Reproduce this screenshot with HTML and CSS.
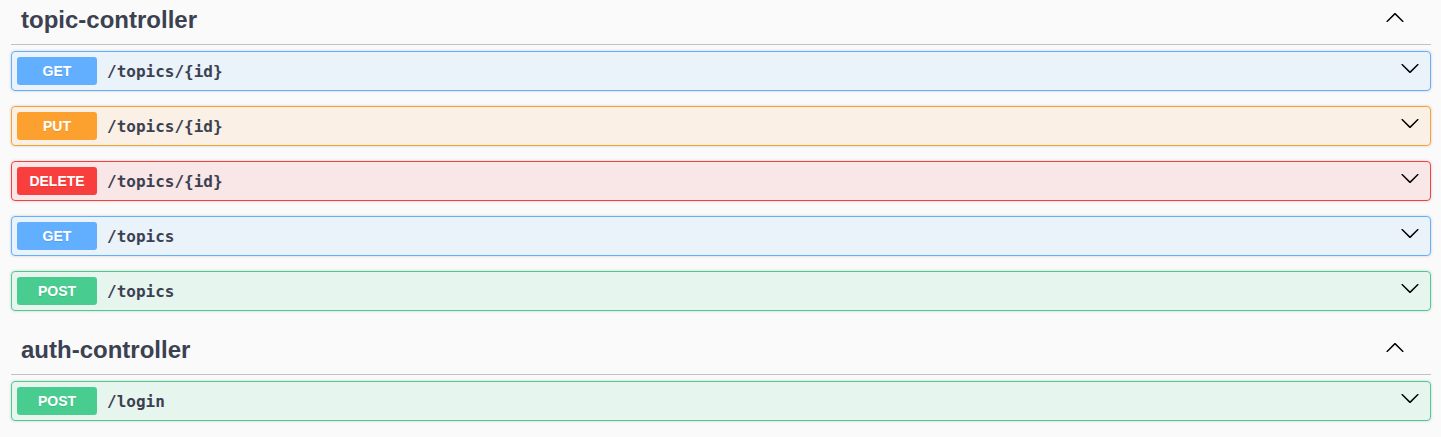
FILE: index.html
```html
<!DOCTYPE html>
<html lang="en">
<head>
<meta charset="utf-8">
<title>Swagger</title>
<link rel="stylesheet" href="styles.css">
</head>
<body>
<div class="wrapper">
  <section class="tag-section">
    <h3 class="tag">
      <span class="tag-name">topic-controller</span>
      <button class="expand" aria-label="collapse">
        <svg class="chev" width="20" height="20" viewBox="0 0 20 20"><path d="M17.418 14.908c.272.268.709.268.979 0s.271-.701 0-.969l-7.908-7.83c-.27-.268-.707-.268-.979 0l-7.908 7.83c-.27.268-.27.701 0 .969.271.268.709.268.979 0L10 7.773l7.418 7.135z"/></svg>
      </button>
    </h3>
    <div class="ops">
      <div class="opblock get">
        <div class="summary">
          <span class="method">GET</span>
          <span class="path">/topics/{id}</span>
          <svg class="chev arrow" width="20" height="20" viewBox="0 0 20 20"><path d="M17.418 6.109c.272-.268.709-.268.979 0s.271.701 0 .969l-7.908 7.83c-.27.268-.707.268-.979 0l-7.908-7.83c-.27-.268-.27-.701 0-.969.271-.268.709-.268.979 0L10 13.25l7.418-7.141z"/></svg>
        </div>
      </div>
      <div class="opblock put">
        <div class="summary">
          <span class="method">PUT</span>
          <span class="path">/topics/{id}</span>
          <svg class="chev arrow" width="20" height="20" viewBox="0 0 20 20"><path d="M17.418 6.109c.272-.268.709-.268.979 0s.271.701 0 .969l-7.908 7.83c-.27.268-.707.268-.979 0l-7.908-7.830c-.27-.268-.27-.701 0-.969.271-.268.709-.268.979 0L10 13.25l7.418-7.141z"/></svg>
        </div>
      </div>
      <div class="opblock delete">
        <div class="summary">
          <span class="method">DELETE</span>
          <span class="path">/topics/{id}</span>
          <svg class="chev arrow" width="20" height="20" viewBox="0 0 20 20"><path d="M17.418 6.109c.272-.268.709-.268.979 0s.271.701 0 .969l-7.908 7.83c-.27.268-.707.268-.979 0l-7.908-7.83c-.27-.268-.27-.701 0-.969.271-.268.709-.268.979 0L10 13.25l7.418-7.141z"/></svg>
        </div>
      </div>
      <div class="opblock get">
        <div class="summary">
          <span class="method">GET</span>
          <span class="path">/topics</span>
          <svg class="chev arrow" width="20" height="20" viewBox="0 0 20 20"><path d="M17.418 6.109c.272-.268.709-.268.979 0s.271.701 0 .969l-7.908 7.83c-.27.268-.707.268-.979 0l-7.908-7.83c-.27-.268-.27-.701 0-.969.271-.268.709-.268.979 0L10 13.25l7.418-7.141z"/></svg>
        </div>
      </div>
      <div class="opblock post">
        <div class="summary">
          <span class="method">POST</span>
          <span class="path">/topics</span>
          <svg class="chev arrow" width="20" height="20" viewBox="0 0 20 20"><path d="M17.418 6.109c.272-.268.709-.268.979 0s.271.701 0 .969l-7.908 7.83c-.27.268-.707.268-.979 0l-7.908-7.83c-.27-.268-.27-.701 0-.969.271-.268.709-.268.979 0L10 13.25l7.418-7.141z"/></svg>
        </div>
      </div>
    </div>
  </section>
  <section class="tag-section">
    <h3 class="tag">
      <span class="tag-name">auth-controller</span>
      <button class="expand" aria-label="collapse">
        <svg class="chev" width="20" height="20" viewBox="0 0 20 20"><path d="M17.418 14.908c.272.268.709.268.979 0s.271-.701 0-.969l-7.908-7.83c-.27-.268-.707-.268-.979 0l-7.908 7.83c-.27.268-.27.701 0 .969.271.268.709.268.979 0L10 7.773l7.418 7.135z"/></svg>
      </button>
    </h3>
    <div class="ops">
      <div class="opblock post">
        <div class="summary">
          <span class="method">POST</span>
          <span class="path">/login</span>
          <svg class="chev arrow" width="20" height="20" viewBox="0 0 20 20"><path d="M17.418 6.109c.272-.268.709-.268.979 0s.271.701 0 .969l-7.908 7.83c-.27.268-.707.268-.979 0l-7.908-7.83c-.27-.268-.27-.701 0-.969.271-.268.709-.268.979 0L10 13.25l7.418-7.141z"/></svg>
        </div>
      </div>
    </div>
  </section>
</div>
</body>
</html>
```

FILE: styles.css
```css
html, body {
  margin: 0;
  padding: 0;
  background: #fafafa;
}
body {
  font-family: "Liberation Sans", Arial, sans-serif;
  color: #3b4151;
  overflow: hidden;
}
.wrapper {
  margin-top: -4px;
  padding: 0 10px 0 11px;
}
.tag {
  display: flex;
  align-items: center;
  height: 48px;
  margin: 0 0 6px;
  padding: 0 16px 0 10px;
  border-bottom: 1px solid rgba(59, 65, 81, 0.3);
  font-size: 24px;
  font-weight: 700;
  color: #3b4151;
}
.tag-name {
  flex: 1;
}
.expand {
  display: flex;
  align-items: center;
  background: none;
  border: none;
  padding: 0 10px;
  margin: 0 0 6px;
  cursor: pointer;
}
.chev {
  display: block;
  fill: #000;
}
.ops {
  display: flex;
  flex-direction: column;
  gap: 15px;
  margin-bottom: 15px;
}
.opblock {
  border: 1px solid #000;
  border-radius: 4px;
  box-shadow: 0 0 3px rgba(0, 0, 0, 0.19);
}
.summary {
  display: flex;
  align-items: center;
  padding: 5px;
}
.method {
  min-width: 80px;
  padding: 6px 0;
  border-radius: 3px;
  font-size: 14px;
  line-height: 16px;
  font-weight: 700;
  color: #fff;
  text-align: center;
  text-shadow: 0 1px 0 rgba(0, 0, 0, 0.1);
}
.path {
  flex: 1;
  padding: 0 10px;
  font-family: "DejaVu Sans Mono", monospace;
  font-size: 16px;
  font-weight: 700;
  color: #3b4151;
}
.arrow {
  margin: 0 5px 6px 0;
}
.get { background: rgba(97, 175, 254, 0.1); border-color: #61affe; }
.get .method { background: #61affe; }
.put { background: rgba(252, 161, 48, 0.1); border-color: #fca130; }
.put .method { background: #fca130; }
.delete { background: rgba(249, 62, 62, 0.1); border-color: #f93e3e; }
.delete .method { background: #f93e3e; }
.post { background: rgba(73, 204, 144, 0.1); border-color: #49cc90; }
.post .method { background: #49cc90; }
```
